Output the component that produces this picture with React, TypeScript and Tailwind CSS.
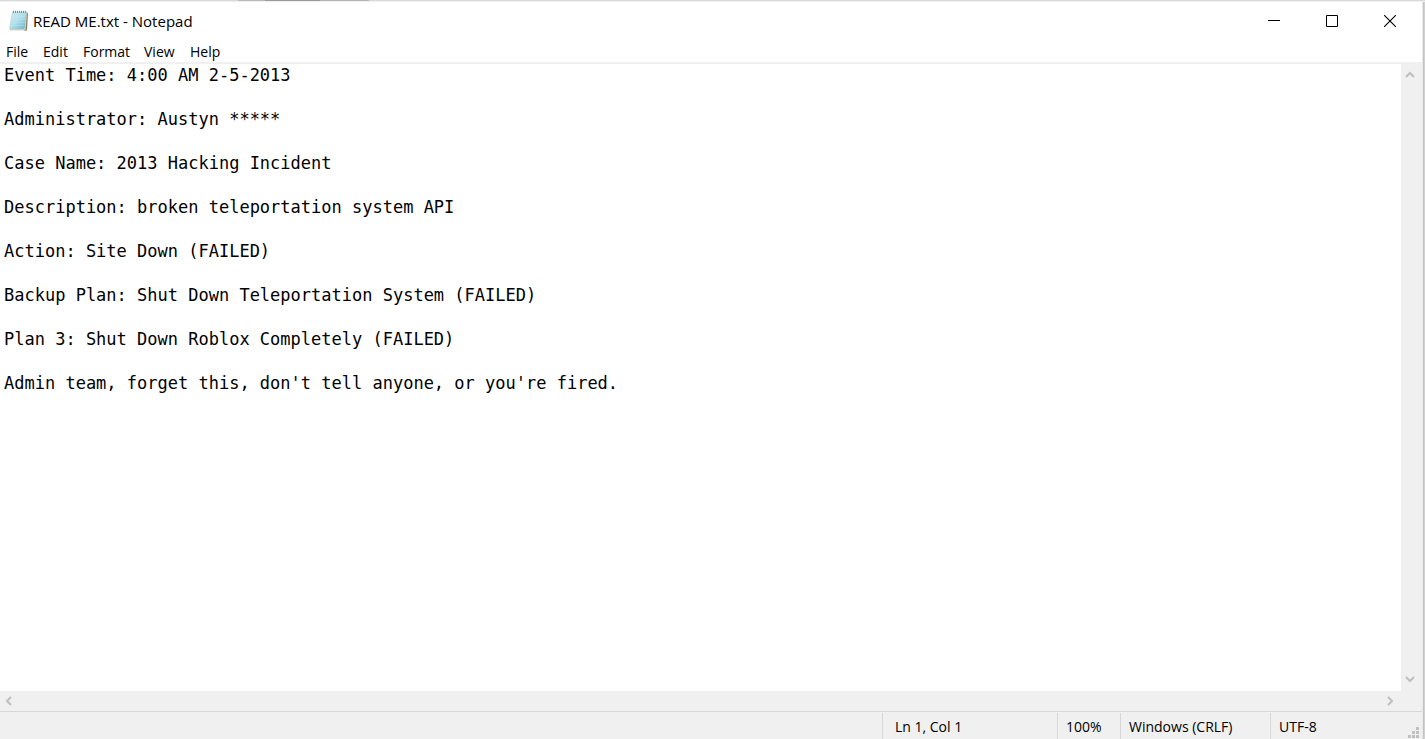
import React from "react";

const menus = [
  { label: "File", width: "w-[37px]" },
  { label: "Edit", width: "w-10" },
  { label: "Format", width: "w-[61px]" },
  { label: "View", width: "w-[46px]" },
  { label: "Help", width: "w-[46px]" },
];

const note = `Event Time: 4:00 AM 2-5-2013

Administrator: Austyn *****

Case Name: 2013 Hacking Incident

Description: broken teleportation system API

Action: Site Down (FAILED)

Backup Plan: Shut Down Teleportation System (FAILED)

Plan 3: Shut Down Roblox Completely (FAILED)

Admin team, forget this, don't tell anyone, or you're fired.`;

function NotepadIcon() {
  return (
    <svg width="20" height="22" viewBox="0 0 20 22" aria-hidden="true">
      <defs>
        <linearGradient id="cover" x1="0" y1="0" x2="1" y2="1">
          <stop offset="0" stopColor="#d3eef4" />
          <stop offset="0.5" stopColor="#b0dfe9" />
          <stop offset="1" stopColor="#62b4c9" />
        </linearGradient>
      </defs>
      <path d="M17 3L19 3L18 20.500L15 20.500Z" fill="#8b7a62" />
      <path d="M4 2.500L18 2.500L16.500 20L1.500 20Z" fill="#e9e2cf" stroke="#b5aa93" strokeWidth="0.5" />
      <path d="M3.500 2L17.500 2L15.500 19L0.500 19Z" fill="url(#cover)" stroke="#8fc3cf" strokeWidth="0.4" />
      <path d="M3 6.500H16.500M2.600 9.500H16M2.200 12.500H15.700M1.800 15.500H15.300" stroke="#c9e9f0" strokeWidth="0.4" />
      <path d="M4.500 0.800V3M6.500 0.800V3M8.500 0.800V3M10.500 0.800V3M12.500 0.800V3M14.500 0.800V3M16.500 0.800V3" stroke="#7d8f94" strokeWidth="1" />
    </svg>
  );
}

function Chevron({ d, w, h }: { d: string; w: number; h: number }) {
  return (
    <svg width={w} height={h} viewBox={`0 0 ${w} ${h}`} fill="none" stroke="#bfbfbf" strokeWidth="2" aria-hidden="true">
      <path d={d} />
    </svg>
  );
}

function TitleBar() {
  const control = "flex h-full w-[58px] items-center justify-center";
  return (
    <header className="flex h-[38px] shrink-0 items-center justify-between">
      <div className="flex items-center gap-1 pl-[9px]">
        <NotepadIcon />
        <h1 className="text-[15px] leading-5">READ ME.txt - Notepad</h1>
      </div>
      <div className="flex h-full pr-[3px]">
        <button type="button" aria-label="Minimize" className={control}>
          <svg width="12" height="12" viewBox="0 0 12 12" stroke="#000"><path d="M0 5.500H12" /></svg>
        </button>
        <button type="button" aria-label="Maximize" className={control}>
          <svg width="12" height="12" viewBox="0 0 12 12" fill="none" stroke="#000"><path d="M0.500 0.500H11.500V11.500H0.500Z" /></svg>
        </button>
        <button type="button" aria-label="Close" className={control}>
          <svg width="12" height="12" viewBox="0 0 12 12" stroke="#000" strokeWidth="1.1"><path d="M0 0L12 12M12 0L0 12" /></svg>
        </button>
      </div>
    </header>
  );
}

function StatusBar() {
  const cell = "flex items-center border-l border-[#d7d7d7] pl-2";
  return (
    <footer className="relative flex h-7 shrink-0 border-t border-[#d7d7d7] bg-[#f0f0f0] pt-px text-[14px]">
      <div className="flex-1" />
      <div className="flex w-[175px] items-center border-l border-[#d7d7d7] pl-3">Ln 1, Col 1</div>
      <div className={`${cell} w-[63px]`}>100%</div>
      <div className={`${cell} w-[150px]`}>Windows (CRLF)</div>
      <div className={`${cell} w-[152px]`}>UTF-8</div>
      <svg className="absolute right-[3px] bottom-px" width="11" height="11" viewBox="0 0 11 11" fill="#bfbfbf" aria-hidden="true">
        <path d="M8 0h3v3h-3zM4 4h3v3h-3zM8 4h3v3h-3zM0 8h3v3h-3zM4 8h3v3h-3zM8 8h3v3h-3z" />
      </svg>
    </footer>
  );
}

export default function App() {
  return (
    <div className="flex h-screen flex-col overflow-hidden bg-white font-['Open_Sans',sans-serif] text-black">
      <div className="flex h-0.5 shrink-0 border-b border-[#f0f0f0] bg-[#d9d9d9] pl-[238px]" aria-hidden="true">
        <div className="w-[27px] bg-[#bababa]" />
        <div className="w-[55px] bg-[#999999]" />
        <div className="w-[49px] bg-[#b5b5b5]" />
      </div>
      <div className="flex min-h-0 flex-1">
        <div className="flex min-w-0 flex-1 flex-col">
          <TitleBar />
          <nav aria-label="Menu" className="flex h-[22px] shrink-0 items-center pl-1.5 text-[14px]">
            {menus.map((m) => (
              <button key={m.label} type="button" className={`${m.width} h-full text-left`}>
                {m.label}
              </button>
            ))}
          </nav>
          <main className="flex min-h-0 flex-1 flex-col border-t-2 border-[#f0f0f0]">
            <div className="flex min-h-0 flex-1">
              <textarea
                aria-label="Text editor"
                wrap="off"
                spellCheck={false}
                defaultValue={note}
                className="min-w-0 flex-1 resize-none overflow-hidden bg-white px-1 font-['DejaVu_Sans_Mono',monospace] text-[17px] leading-[22px] outline-none"
              />
              <div className="flex w-[21px] flex-col items-center justify-between bg-[#f0f0f0] pt-[7px] pr-[3px] pb-2">
                <button type="button" aria-label="Scroll up">
                  <Chevron w={10} h={7} d="M1 6L5 2L9 6" />
                </button>
                <button type="button" aria-label="Scroll down">
                  <Chevron w={10} h={7} d="M1 1L5 5L9 1" />
                </button>
              </div>
            </div>
            <div className="flex h-5 shrink-0 items-center justify-between bg-[#f0f0f0] pr-7 pl-[5px]">
              <button type="button" aria-label="Scroll left">
                <Chevron w={7} h={10} d="M6 1L2 5L6 9" />
              </button>
              <button type="button" aria-label="Scroll right">
                <Chevron w={7} h={10} d="M1 1L5 5L1 9" />
              </button>
            </div>
          </main>
          <StatusBar />
        </div>
        <div className="w-[3px] shrink-0 border-l border-[#e8e8e8] bg-linear-to-r from-[#bdbdbd] to-[#d8d8d8]" aria-hidden="true" />
      </div>
    </div>
  );
}
